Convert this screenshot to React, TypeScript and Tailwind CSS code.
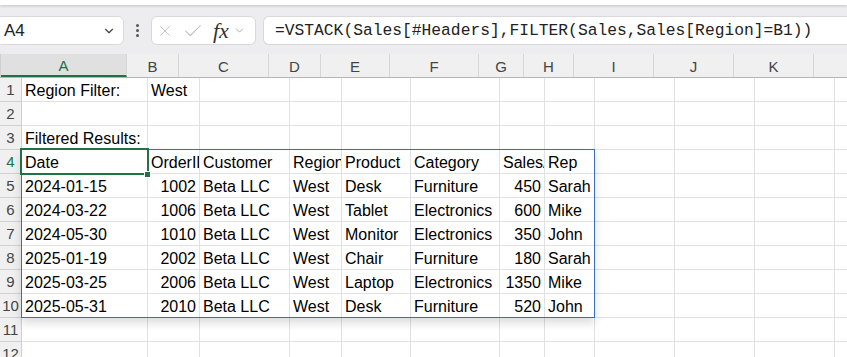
import React from 'react';
import { ChevronDown, X, Check } from 'lucide-react';

interface Col {
  key: string;
  width: string;
}

const columns: Col[] = [
  { key: 'A', width: 'w-[126px]' },
  { key: 'B', width: 'w-[52px]' },
  { key: 'C', width: 'w-[90px]' },
  { key: 'D', width: 'w-[52px]' },
  { key: 'E', width: 'w-[69px]' },
  { key: 'F', width: 'w-[89px]' },
  { key: 'G', width: 'w-[45px]' },
  { key: 'H', width: 'w-[50px]' },
  { key: 'I', width: 'w-[80px]' },
  { key: 'J', width: 'w-[80px]' },
  { key: 'K', width: 'w-[80px]' },
  { key: 'L', width: 'w-[80px]' },
];

// right-aligned (numeric) columns
const numeric = [1, 6];

const sheet: string[][] = [
  ['Region Filter:', 'West'],
  [],
  ['Filtered Results:'],
  ['Date', 'OrderID', 'Customer', 'Region', 'Product', 'Category', 'SalesAmount', 'Rep'],
  ['2024-01-15', '1002', 'Beta LLC', 'West', 'Desk', 'Furniture', '450', 'Sarah'],
  ['2024-03-22', '1006', 'Beta LLC', 'West', 'Tablet', 'Electronics', '600', 'Mike'],
  ['2024-05-30', '1010', 'Beta LLC', 'West', 'Monitor', 'Electronics', '350', 'John'],
  ['2025-01-19', '2002', 'Beta LLC', 'West', 'Chair', 'Furniture', '180', 'Sarah'],
  ['2025-03-25', '2006', 'Beta LLC', 'West', 'Laptop', 'Electronics', '1350', 'Mike'],
  ['2025-05-31', '2010', 'Beta LLC', 'West', 'Desk', 'Furniture', '520', 'John'],
  [],
  [],
];

const App: React.FC = () => {
  return (
    <div className="w-[847px] h-[357px] overflow-hidden bg-white font-['Liberation_Sans',sans-serif]">
      {/* Formula bar */}
      <div className="h-[54px] bg-[#ededf0] relative">
        <div className="h-[5px] bg-white shadow-[0_1px_3px_rgba(0,0,0,0.18)]"></div>
        <div className="flex items-center mt-[11px] h-[29px]">
          <div className="ml-[-4px] w-[128px] h-full bg-white rounded-md border border-[#d9d9dc] flex items-center justify-between pl-[7px] pr-[7px]">
            <span className="text-[17px] text-[#222] pt-[1px]">A4</span>
            <ChevronDown className="w-[14px] h-[14px] text-[#444]" strokeWidth={2} />
          </div>
          <div className="w-[27px] flex flex-col items-center gap-[2px]">
            <span className="w-[3px] h-[3px] bg-[#555] rounded-full"></span>
            <span className="w-[3px] h-[3px] bg-[#555] rounded-full"></span>
            <span className="w-[3px] h-[3px] bg-[#555] rounded-full"></span>
          </div>
          <div className="w-[105px] h-full bg-white rounded-md border border-[#d9d9dc] flex items-center pl-[4px]">
            <X className="w-[18px] h-[18px] text-[#b8b8b8]" strokeWidth={1.1} />
            <Check className="ml-[8px] w-[22px] h-[22px] text-[#b8b8b8]" strokeWidth={1.1} />
            <span className="ml-[9px] font-['Liberation_Serif',serif] italic text-[22px] leading-none text-[#333]">fx</span>
            <ChevronDown className="ml-[4px] w-[13px] h-[13px] text-[#999]" strokeWidth={1.5} />
          </div>
          <div className="ml-[7px] flex-1 h-full bg-white rounded-l-md border border-r-0 border-[#d9d9dc] flex items-center pl-[11px]">
            <span className="font-['Liberation_Mono',monospace] text-[16.3px] text-[#222] whitespace-nowrap pt-[2px]">
              =VSTACK(Sales[#Headers],FILTER(Sales,Sales[Region]=B1))
            </span>
          </div>
        </div>
      </div>

      {/* Grid */}
      <div className="relative">
        {/* Column headers */}
        <div className="flex h-[24px] bg-[#f0f0f0] border-b border-[#b5b5b5]">
          <div className="w-[22px] h-full border-r border-[#d0d0d0] relative">
            <svg className="absolute right-[3px] bottom-[3px]" width="12" height="12" viewBox="0 0 12 12">
              <polygon points="12,0 12,12 0,12" fill="#d4d4d4" />
            </svg>
          </div>
          {columns.map((c) => (
            <div
              key={c.key}
              className={`${c.width} shrink-0 h-full flex items-center justify-center pt-[3px] text-[15px] border-r border-[#d6d6d6] ${
                c.key === 'A' ? 'bg-[#e0e0e0] text-[#1e7145] border-b-2 border-b-[#1e7145]' : 'text-[#444]'
              }`}
            >
              {c.key}
            </div>
          ))}
        </div>

        {/* Rows */}
        {sheet.map((row, r) => (
          <div key={r} className="flex h-[24px]">
            <div
              className={`w-[22px] shrink-0 h-full bg-[#f0f0f0] border-r border-b border-[#d0d0d0] flex items-center justify-center pt-[2px] text-[15px] ${
                r === 3 ? 'text-[#1e7145] bg-[#e0e0e0]' : 'text-[#444]'
              }`}
            >
              {r + 1}
            </div>
            {columns.map((c, i) => (
              <div
                key={c.key}
                className={`${c.width} shrink-0 h-full border-r border-b border-[#e1e1e1] flex items-center pt-[2px] overflow-hidden whitespace-nowrap text-[16px] text-black ${
                  numeric.includes(i) && r > 3 ? 'justify-end pr-[3px]' : 'pl-[3px]'
                }`}
              >
                {row[i] ?? ''}
              </div>
            ))}
          </div>
        ))}

        {/* Spill range border */}
        <div className="absolute left-[21px] top-[95px] w-[574px] h-[169px] border border-[#3b6cc4] shadow-[0_5px_9px_rgba(0,0,0,0.14)] pointer-events-none"></div>

        {/* Active cell */}
        <div className="absolute left-[20px] top-[94px] w-[129px] h-[27px] border-2 border-[#1f7244] pointer-events-none"></div>
        <div className="absolute left-[144px] top-[117px] w-[7px] h-[7px] bg-[#1f7244] border border-white"></div>
      </div>
    </div>
  );
};

export default App;
